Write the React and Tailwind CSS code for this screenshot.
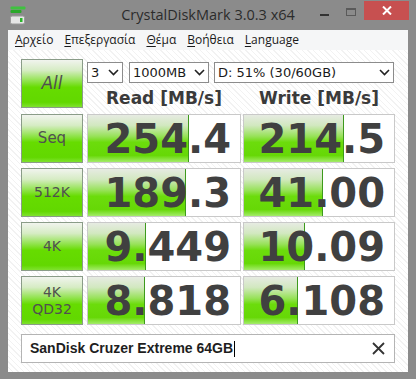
import React from 'react';

// CrystalDiskMark main window

const rows = [
  { label: ['Seq'], font: 'comic', read: '254.4', readBar: 101, write: '214.5', writeBar: 100 },
  { label: ['512K'], read: '189.3', readBar: 98, write: '41.00', writeBar: 79 },
  { label: ['4K'], read: '9.449', readBar: 58, write: '10.09', writeBar: 61 },
  { label: ['4K', 'QD32'], read: '8.818', readBar: 57, write: '6.108', writeBar: 54 },
];

const menu = [
  ['Α', 'ρχείο'],
  ['Ε', 'πεξεργασία'],
  ['Θ', 'έμα'],
  ['Β', 'οήθεια'],
  ['L', 'anguage'],
];

function GreenButton({ children, className = '' }) {
  return (
    <div
      className={`flex h-[49px] w-[62px] shrink-0 flex-col items-center justify-center border border-[#8a9c88] bg-[linear-gradient(180deg,#f1f4ee_0%,#d6ecc4_22%,#8fe34a_45%,#66dc00_58%,#62d800_90%,#7fe22e_100%)] leading-[17px] text-[#505050] ${className}`}
    >
      {children}
    </div>
  );
}

function Chevron() {
  return (
    <svg width="11" height="7" viewBox="0 0 11 7" className="shrink-0">
      <path d="M1 1l4.5 4.5L10 1" fill="none" stroke="#222" strokeWidth="1.6" />
    </svg>
  );
}

function Combo({ value, width }) {
  return (
    <div
      className="flex h-[21px] items-center justify-between border border-[#8c8c8c] bg-white pl-[3px] pr-[3px] text-[13px] leading-[19px] text-[#1a1a1a]"
      style={{ width }}
    >
      <span>{value}</span>
      <Chevron />
    </div>
  );
}

function ResultCell({ value, bar, width }) {
  return (
    <div
      className="relative flex h-[49px] items-center justify-end border border-[#c9c9c9] bg-white pr-[9px]"
      style={{ width }}
    >
      <div
        className="absolute left-0 top-0 h-full border-r border-r-[#3d9a1c] bg-[linear-gradient(180deg,#e6ebe2_0%,#d2e8c0_22%,#98e25a_45%,#6cdc0c_58%,#66d806_86%,#a4ec6a_100%)]"
        style={{ width: bar }}
      />
      <span className="relative font-['DejaVu_Sans',sans-serif] text-[40px] font-bold leading-none text-[#404040]">
        {value}
      </span>
    </div>
  );
}

export default function App() {
  return (
    <div className="h-[379px] w-[416px] bg-[#8b8b8b] font-['DejaVu_Sans','Liberation_Sans',sans-serif]">
      {/* Title bar */}
      <div className="grid h-[30px] grid-cols-[1fr_auto_1fr] items-start">
        <div className="pl-[10px] pt-[6px]">
          <svg width="17" height="19" viewBox="0 0 17 19">
            <rect x="0.5" y="0.5" width="15" height="3" rx="1" fill="#3fc23f" />
            <rect x="0.5" y="4" width="11" height="3" rx="1" fill="#2aa82a" />
            <rect x="0.5" y="10" width="14" height="8" rx="1.5" fill="#e6e6e6" stroke="#9a9a9a" />
            <rect x="10" y="12" width="2.5" height="4" fill="#2bb52b" />
          </svg>
        </div>
        <div className="pt-[5px] font-['Open_Sans',sans-serif] text-[14.5px] leading-[20px] text-[#2b2b2b]">
          CrystalDiskMark 3.0.3 x64
        </div>
        <div className="flex items-start justify-end pr-[7px]">
          <div className="mr-[17px] mt-[14px] h-[2px] w-[9px] bg-[#333]" />
          <div className="mr-[8px] mt-[8px] h-[8px] w-[10px] border border-t-2 border-[#5a5a5a]" />
          <div className="mt-[1px] flex h-[19px] w-[45px] items-center justify-center bg-[#c75050]">
            <svg width="10" height="9" viewBox="0 0 10 9">
              <path d="M1 0.5l8 8M9 0.5l-8 8" stroke="#fff" strokeWidth="2" />
            </svg>
          </div>
        </div>
      </div>

      {/* Client area */}
      <div className="mx-[8px] h-[342px] bg-white">
        {/* Menu bar */}
        <div className="flex h-[20px] items-center gap-[11px] bg-[#f5f6f7] pl-[7px] font-['Open_Sans',sans-serif] text-[12px] text-[#1a1a1a]">
          {menu.map(([first, rest]) => (
            <span key={rest}>
              <span className="underline underline-offset-2">{first}</span>
              {rest}
            </span>
          ))}
        </div>

        <div className="h-[322px] bg-[repeating-linear-gradient(45deg,#ffffff_0px,#ffffff_3px,#f2f2f2_3px,#f2f2f2_4px)] pl-[13px] pt-[9px]">
          {/* Top row */}
          <div className="flex h-[49px] gap-[4px]">
            <GreenButton className="font-['DejaVu_Sans',sans-serif] text-[17px] italic">All</GreenButton>
            <div className="flex flex-col">
              <div className="mt-[3px] flex gap-[6px]">
                <Combo value="3" width={36} />
                <Combo value="1000MB" width={80} />
                <div className="ml-[-1px]">
                  <Combo value="D: 51% (30/60GB)" width={180} />
                </div>
              </div>
              <div className="mt-[4px] flex gap-[2px] text-[17px] font-bold leading-[22px] text-[#3a3a3a]">
                <div className="w-[154px] text-center">Read [MB/s]</div>
                <div className="w-[152px] text-center">Write [MB/s]</div>
              </div>
            </div>
          </div>

          {/* Result rows */}
          <div className="mt-[6px] flex flex-col gap-[5px]">
            {rows.map((r) => (
              <div key={r.read} className="flex gap-[4px]">
                <GreenButton
                  className={
                    r.font === 'comic'
                      ? "font-['DejaVu_Sans',sans-serif] text-[15px]"
                      : "font-['DejaVu_Sans',sans-serif] text-[14px]"
                  }
                >
                  {r.label.map((l) => (
                    <span key={l}>{l}</span>
                  ))}
                </GreenButton>
                <div className="flex gap-[2px]">
                  <ResultCell value={r.read} bar={r.readBar} width={154} />
                  <ResultCell value={r.write} bar={r.writeBar} width={152} />
                </div>
              </div>
            ))}
          </div>

          {/* Comment */}
          <div className="mt-[9px] flex h-[29px] w-[374px] items-center border border-[#b4b4b4] bg-white pl-[8px] pr-[9px]">
            <span className="font-['Liberation_Sans',sans-serif] text-[14px] font-bold text-[#1e1e1e]">
              SanDisk Cruzer Extreme 64GB
            </span>
            <span className="ml-[1px] h-[16px] w-[1px] bg-black" />
            <span className="ml-auto">
              <svg width="13" height="13" viewBox="0 0 13 13">
                <path d="M1 1l11 11M12 1L1 12" stroke="#333" strokeWidth="1.8" />
              </svg>
            </span>
          </div>
        </div>
      </div>
    </div>
  );
}
